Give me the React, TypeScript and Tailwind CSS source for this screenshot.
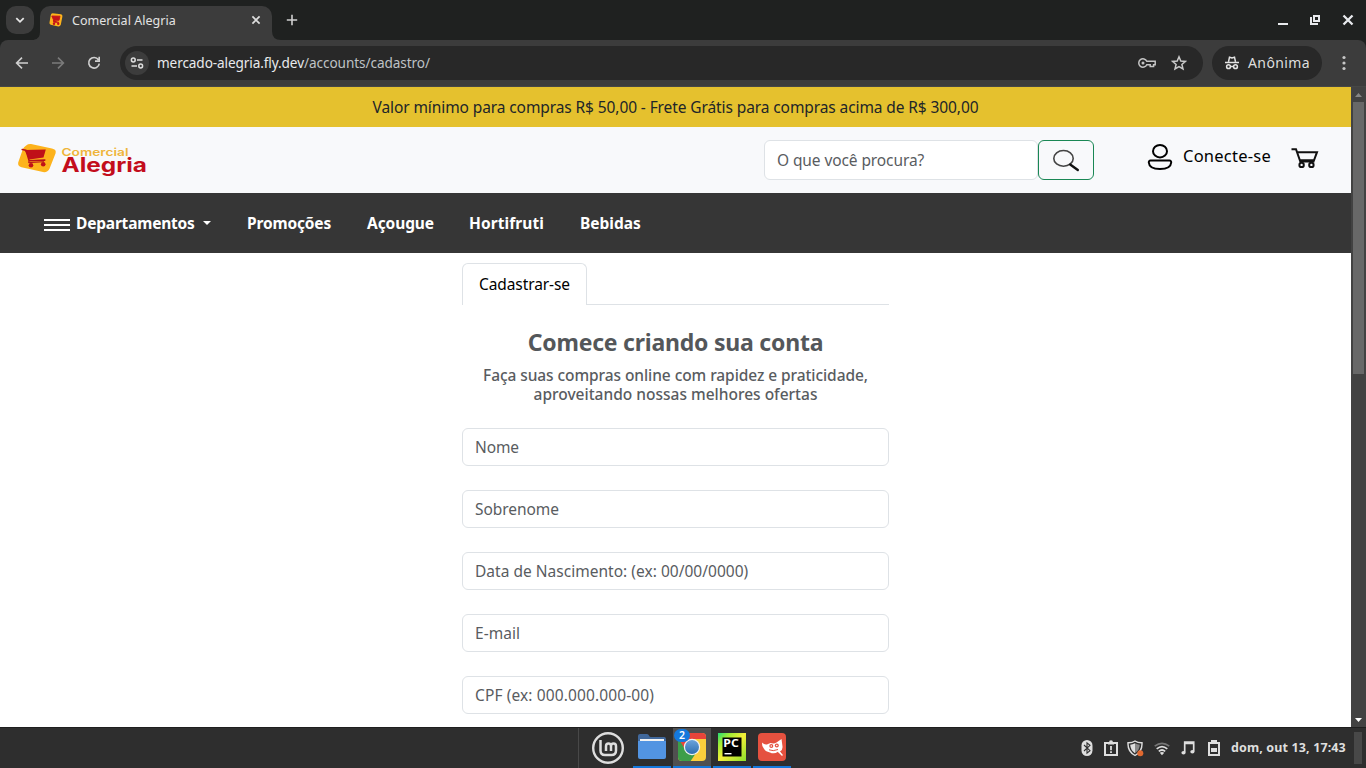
import React from "react";

function LogoMark({ className }: { className: string }) {
  return (
    <svg viewBox="0 0 40 32" className={className} preserveAspectRatio="none">
      <path d="M9.500 2.200Q11 .9 14 1.100L35 5.800Q39.600 6.800 38.600 10.500L32.500 26.500Q30.500 30.700 26 30L4.500 25Q.5 23.800 1.200 20L6 6Q7 3.800 9.500 2.200Z" fill="#fdb31c" />
      <path d="M7.500 7.300L28.800 6.800L26.500 15L12.500 17Z" fill="#c01018" />
      <path d="M5.200 6.800L9 7.500L12.200 18.300L27.800 17.700" fill="none" stroke="#b8101a" strokeWidth="1.600" strokeLinecap="round" strokeLinejoin="round" />
      <path d="M12.200 18.300L11.500 20.300L27 19.300" fill="none" stroke="#b8101a" strokeWidth="1" />
      <circle cx="14" cy="23" r="2.300" fill="#c01018" />
      <circle cx="26.200" cy="22" r="2.300" fill="#c01018" />
    </svg>
  );
}

function TabStrip() {
  return (
    <div className="flex h-10 shrink-0 bg-[#1f2120] pl-1.5">
      <div className="mt-[6px] flex h-7 w-7 items-center justify-center rounded-[10px] bg-[#3c3c3c]">
        <svg width="10" height="8" viewBox="0 0 10 8" fill="none" stroke="#e6e6e6" strokeWidth="1.800">
          <path d="M1.300 2.200L5 5.800L8.700 2.200" />
        </svg>
      </div>
      <svg width="6" height="40" viewBox="0 0 6 40" className="shrink-0">
        <path d="M6 32Q6 40 -2 40H6Z" fill="#3c3c3c" />
      </svg>
      <div className="mt-[6px] flex h-[34px] w-[232px] shrink-0 items-center rounded-t-[10px] bg-[#3c3c3c] pb-[6px] pl-[9px] pr-[10px]">
        <svg width="14" height="14" viewBox="0 0 14 14" className="shrink-0">
          <path d="M3.500 .3L12 1.200Q13.700 1.700 13.400 3.400L11.800 11.700Q11 13.700 9.300 13.400L1.700 11.700Q.1 11 .5 9.500L1.800 2Q2.100 .3 3.500 .3Z" fill="#fdb31c" />
          <path d="M2.800 3L11 3.200L10 7.300H4.700ZM4.400 7L4.700 9.300H10" fill="#c41318" stroke="#c41318" strokeWidth=".9" />
          <circle cx="5" cy="10.700" r="1.200" fill="#c41318" />
          <circle cx="9.200" cy="10.700" r="1.200" fill="#c41318" />
        </svg>
        <span className="ml-[9px] flex-1 pt-px text-[12.5px] leading-5 tracking-[0.04px] text-[#e3e3e3]">Comercial Alegria</span>
        <svg width="12" height="12" viewBox="0 0 12 12" stroke="#dedede" strokeWidth="1.700">
          <path d="M2.400 2.400L9.600 9.600M9.600 2.400L2.400 9.600" />
        </svg>
      </div>
      <svg width="9" height="40" viewBox="0 0 9 40" className="shrink-0">
        <path d="M0 31Q0 40 9 40H0Z" fill="#3c3c3c" />
      </svg>
      <svg width="12" height="12" viewBox="0 0 12 12" className="ml-[5px] mt-[14px]" stroke="#d0d0d0" strokeWidth="1.600">
        <path d="M6 .8V11.200M.8 6H11.200" />
      </svg>
      <div className="ml-auto flex gap-[19px] pr-[12px] pt-[14px]">
        <svg width="12" height="12" viewBox="0 0 12 12" className="mr-[1px]"><rect x="1" y="9" width="10" height="2" fill="#e8eaed" /></svg>
        <svg width="12" height="12" viewBox="0 0 12 12" fill="none" stroke="#e8eaed" strokeWidth="2">
          <rect x="5" y="2" width="5" height="5" />
          <path d="M2 3V10H9" />
        </svg>
        <svg width="12" height="12" viewBox="0 0 12 12" stroke="#e8eaed" strokeWidth="2.300" className="ml-[2px]">
          <path d="M1.500 1.500L10.500 10.500M10.500 1.500L1.500 10.500" />
        </svg>
      </div>
    </div>
  );
}

function Toolbar() {
  return (
    <div className="bg-[#1f2120]">
      <div className="flex h-[47px] items-center rounded-t-[8px] border-b border-[#464746] bg-[#3c3c3c] pl-[15px]">
        <svg width="14" height="14" viewBox="0 0 14 14" fill="none" stroke="#d0d0d0" strokeWidth="1.600">
          <path d="M13 7H2M7 1.600L1.600 7L7 12.400" />
        </svg>
        <svg width="14" height="14" viewBox="0 0 14 14" fill="none" stroke="#7b7b7b" strokeWidth="1.600" className="ml-[22px]">
          <path d="M1 7H12M7 1.600L12.400 7L7 12.400" />
        </svg>
        <svg width="14" height="14" viewBox="0 0 14 14" fill="none" stroke="#d0d0d0" strokeWidth="1.600" className="ml-[22px]">
          <path d="M11.400 3.700A5.300 5.300 0 1 0 12.300 7.600M12.200 .8V5.100H8" />
        </svg>
        <div className="ml-[19px] flex h-[34px] w-[1083px] items-center rounded-full bg-[#282828] pl-[5px] pr-[16px]">
          <div className="flex h-6 w-6 items-center justify-center rounded-full bg-[#3c3c3c]">
            <svg width="14" height="12" viewBox="0 0 14 12" fill="none" stroke="#dedede" strokeWidth="1.500">
              <circle cx="3.300" cy="3" r="1.900" />
              <path d="M7 3H12.500M1.500 9H7" />
              <circle cx="10.700" cy="9" r="1.900" />
            </svg>
          </div>
          <div className="ml-2 flex whitespace-nowrap text-[13.6px] leading-5">
            <span className="tracking-[-0.1px] text-[#e8eaed]">mercado-alegria.fly.dev</span>
            <span className="tracking-[-0.075px] text-[#bfc2c5]">/accounts/cadastro/</span>
          </div>
          <svg width="18" height="10" viewBox="0 0 18 10" fill="none" stroke="#c4c4c4" strokeWidth="1.500" className="ml-auto">
            <path d="M8.800 3.300H17.200V6.700H15.600V8.600H12.200V6.700H8.800A4.200 4.200 0 1 1 8.800 3.300Z" />
            <circle cx="5" cy="5" r="1.500" fill="#c4c4c4" stroke="none" />
          </svg>
          <svg width="16" height="16" viewBox="0 0 16 16" fill="none" stroke="#c9c9c9" strokeWidth="1.500" className="ml-[15px]">
            <path d="M8 1.800L9.800 6L14.400 6.400L10.900 9.400L12 13.900L8 11.500L4 13.900L5.100 9.400L1.600 6.400L6.200 6Z" />
          </svg>
        </div>
        <div className="ml-[9px] flex h-[34px] w-[110px] items-center rounded-full bg-[#282828] pl-[13px]">
          <svg width="14" height="14" viewBox="0 0 14 14" fill="none" stroke="#e3e3e3" strokeWidth="1.500">
            <path d="M3.500 5.800L4.500 1.200L7 2L9.500 1.200L10.500 5.800" />
            <path d="M0 6.500H14" />
            <circle cx="3.500" cy="10.700" r="1.900" />
            <circle cx="10.500" cy="10.700" r="1.900" />
            <path d="M5.400 10.500H8.600" />
          </svg>
          <span className="ml-[9px] text-[14px] leading-5 tracking-[0.4px] text-[#dedede]">Anônima</span>
        </div>
        <svg width="4" height="16" viewBox="0 0 4 16" fill="#c7c7c7" className="ml-[20px]">
          <circle cx="2" cy="2.500" r="1.600" />
          <circle cx="2" cy="8" r="1.600" />
          <circle cx="2" cy="13.500" r="1.600" />
        </svg>
      </div>
    </div>
  );
}

function Header() {
  return (
    <header className="flex h-[66px] shrink-0 items-start bg-[#f8f9fb] pl-[17px]">
      <LogoMark className="mt-[16px] h-[31px] w-[40px]" />
      <svg width="92" height="36" viewBox="0 0 92 36" className="ml-[3px] mt-[16px]">
        <text x="1.500" y="12.700" fontFamily="Inter" fontWeight="600" fontSize="10.500" fill="#efb53a" textLength="67" lengthAdjust="spacingAndGlyphs">Comercial</text>
        <text x="1.500" y="28.800" fontFamily="Inter" fontWeight="700" fontSize="19.500" fill="#c30d1c" textLength="85.500" lengthAdjust="spacingAndGlyphs">Alegria</text>
      </svg>
      <div className="ml-auto mt-[13px] flex">
        <div className="flex h-10 w-[274px] items-center rounded-md border border-[#dee2e6] bg-white pl-3 pt-[2px] text-[15.5px] tracking-[-0.1px] text-[#595c5f]">O que você procura?</div>
        <div className="flex h-10 w-14 items-center justify-center rounded-md border border-[#198754]">
          <svg width="28" height="24" viewBox="0 0 28 24" fill="none">
            <ellipse cx="11.500" cy="10.400" rx="9.700" ry="7.900" stroke="#444" strokeWidth="1.600" />
            <path d="M18.200 16.500L25.800 22" stroke="#111" strokeWidth="2.400" strokeLinecap="round" />
          </svg>
        </div>
      </div>
      <svg width="26" height="28" viewBox="0 0 26 28" fill="none" stroke="#000" strokeWidth="2" className="ml-[53px] mt-[16px]">
        <ellipse cx="13" cy="8.200" rx="7" ry="6.200" />
        <path d="M3.500 17.600H22.500Q24.300 17.600 24.200 19.500C23.800 24.500 18.500 26.100 13 26.100S2.200 24.500 1.800 19.500Q1.700 17.600 3.500 17.600Z" />
      </svg>
      <span className="ml-[10px] mt-[17px] w-[88px] whitespace-nowrap text-[16.5px] leading-6 tracking-[0.23px] text-black">Conecte-se</span>
      <svg width="30" height="24" viewBox="0 0 30 24" fill="none" stroke="#111" strokeWidth="2" className="ml-[19px] mr-[31px] mt-[19px]">
        <path d="M1.500 3.200H6L10.300 15.500H24.500M7 6.200H27L24 14.300H9.700" />
        <circle cx="11.600" cy="18.900" r="2.200" />
        <circle cx="21.400" cy="18.900" r="2.200" />
      </svg>
    </header>
  );
}

function Nav() {
  return (
    <nav className="flex h-[60px] shrink-0 items-center whitespace-nowrap bg-[#363636] pl-11 text-[15.5px] font-bold text-white">
      <div className="mt-[3px] flex w-[26px] flex-col gap-[3px]">
        <div className="h-[2px] bg-white" />
        <div className="h-[2px] bg-white" />
        <div className="h-[2px] bg-white" />
      </div>
      <span className="ml-[6px] w-[119px] pt-[2px] tracking-[-0.2px]">Departamentos</span>
      <svg width="8" height="4" viewBox="0 0 8 4" className="ml-2"><path d="M0 0H8L4 4Z" fill="#fff" /></svg>
      <span className="ml-9 w-[84px] pt-[2px] tracking-[-0.16px]">Promoções</span>
      <span className="ml-9 w-[66px] pt-[2px] tracking-[-0.09px]">Açougue</span>
      <span className="ml-9 w-[75px] pt-[2px] tracking-[0.08px]">Hortifruti</span>
      <span className="ml-9 pt-[2px]">Bebidas</span>
    </nav>
  );
}

const fields: { label: string; tracking: string }[] = [
  { label: "Nome", tracking: "tracking-[-0.1px]" },
  { label: "Sobrenome", tracking: "tracking-[-0.05px]" },
  { label: "Data de Nascimento: (ex: 00/00/0000)", tracking: "tracking-[0.02px]" },
  { label: "E-mail", tracking: "tracking-[0.03px]" },
  { label: "CPF (ex: 000.000.000-00)", tracking: "tracking-[0.12px]" },
];

function Form() {
  return (
    <main className="mx-auto mt-[10px] flex w-[427px] flex-col">
      <div className="flex">
        <div className="flex h-[42px] w-[125px] items-center justify-center rounded-t-md border border-b-0 border-[#dee2e6] text-[15.5px] tracking-[-0.09px] text-black">Cadastrar-se</div>
        <div className="flex-1 border-b border-[#dee2e6]" />
      </div>
      <h1 className="mt-[23px] text-center text-[23px] font-bold leading-[29px] tracking-[-0.22px] text-[#54575a]">Comece criando sua conta</h1>
      <p className="mt-[9px] whitespace-nowrap text-center text-[15.5px] font-medium leading-[19px] text-[#595c5f]">
        <span className="tracking-[-0.075px]">Faça suas compras online com rapidez e praticidade,</span>
        <br />
        aproveitando nossas melhores ofertas
      </p>
      <div className="mt-[24px] flex flex-col gap-6">
        {fields.map((f) => (
          <div key={f.label} className="flex h-[38px] items-center rounded-md border border-[#dee2e6] bg-white pl-3 pt-[2px] text-[15.5px] text-[#595c5f]">
            <span className={f.tracking}>{f.label}</span>
          </div>
        ))}
      </div>
    </main>
  );
}

function Scrollbar() {
  return (
    <div className="flex w-[15px] shrink-0 flex-col items-center bg-[#424242]">
      <svg width="15" height="15" viewBox="0 0 15 15"><path d="M4 10L7.500 6L11 10Z" fill="#868686" /></svg>
      <div className="h-[272px] w-[11px] bg-[#686868]" />
      <svg width="15" height="15" viewBox="0 0 15 15" className="mt-auto"><path d="M4 6L7.500 10L11 6Z" fill="#fff" /></svg>
    </div>
  );
}

function ChromeIcon() {
  return (
    <svg width="30" height="30" viewBox="0 0 30 30">
      <defs>
        <clipPath id="chromeClip"><rect x="1" y="1" width="28" height="28" rx="4" /></clipPath>
        <linearGradient id="chromeBlue" x1="0" y1="0" x2="0" y2="1">
          <stop offset="0" stopColor="#6ba3dc" />
          <stop offset="1" stopColor="#2f6fb0" />
        </linearGradient>
      </defs>
      <g clipPath="url(#chromeClip)">
        <rect width="30" height="30" fill="#fbcf3c" />
        <path d="M0 0H30V7H15L9 20L0 6Z" fill="#e8443a" />
        <path d="M0 4L9 19L19 21L13 30H0Z" fill="#3d9e49" />
      </g>
      <circle cx="15" cy="15" r="8.200" fill="#f3f3f3" />
      <circle cx="15" cy="15" r="7" fill="url(#chromeBlue)" />
    </svg>
  );
}

function Taskbar() {
  return (
    <footer className="flex h-[41px] shrink-0 border-t border-[#1f1f1f] bg-[#2e2e2e] pl-[578px]">
      <div className="w-px bg-[#484848]" />
      <div className="ml-[11px] flex w-9 items-center justify-center">
        <svg width="34" height="34" viewBox="0 0 34 34" fill="none" stroke="#dedede">
          <circle cx="17" cy="17" r="14.800" strokeWidth="2.400" />
          <path d="M9.500 9V19.500Q9.500 24 14 24H20.500Q25 24 25 19.500V15.200Q25 12.500 22.500 12.500T20 15.200V20M20 15.200Q20 12.500 17.500 12.500T15 15.200V20" strokeWidth="2.500" />
        </svg>
      </div>
      <div className="ml-[7px] flex gap-[2px]">
        <div className="flex w-[38px] flex-col items-center border-b-2 border-[#1478dc] pt-[5px]">
          <svg width="30" height="28" viewBox="0 0 30 28">
            <path d="M1 3Q1 1 3 1H10Q11.500 1 12 2.500T14 4H27Q29 4 29 6V14H1Z" fill="#41689b" />
            <rect x="3" y="6" width="24" height="5" fill="#f3f3f3" />
            <path d="M1 8H29V24Q29 26 27 26H3Q1 26 1 24Z" fill="#5294e2" />
          </svg>
        </div>
        <div className="relative flex w-[38px] flex-col items-center border-b-2 border-[#1478dc] bg-[#505050] pt-1">
          <ChromeIcon />
          <div className="absolute left-[1px] top-[1px] flex h-[13px] w-4 items-center justify-center rounded-full bg-[#1478dc] text-[10.5px] font-semibold leading-none text-white">2</div>
        </div>
        <div className="flex w-[38px] flex-col items-center border-b-2 border-[#1478dc] pt-[5px]">
          <svg width="28" height="28" viewBox="0 0 28 28">
            <defs>
              <linearGradient id="pcGrad" x1="0" y1="0" x2="1" y2="1">
                <stop offset="0" stopColor="#22dc78" />
                <stop offset=".22" stopColor="#9dec35" />
                <stop offset=".5" stopColor="#f4ef38" />
                <stop offset="1" stopColor="#8ae02c" />
              </linearGradient>
            </defs>
            <rect width="28" height="28" fill="url(#pcGrad)" />
            <rect x="4.500" y="4.500" width="19" height="19" fill="#000" />
            <text x="5.300" y="14" fontFamily="Noto Sans" fontWeight="700" fontSize="10.500" fill="#fff" textLength="15.500" lengthAdjust="spacingAndGlyphs">PC</text>
            <rect x="6.500" y="20" width="7" height="1.400" fill="#fff" />
          </svg>
        </div>
        <div className="flex w-[38px] flex-col items-center border-b-2 border-[#1478dc] pt-[5px]">
          <svg width="28" height="28" viewBox="0 0 28 28">
            <rect width="28" height="28" rx="4" fill="#e5513f" />
            <path d="M4 9.500Q7 12.500 10 11L12.500 10Q16 11 18.500 9.500L23.500 6L24.500 13.500Q24.800 17 22 18.500L24 21.500L21.500 20L20 18.800Q16 21.500 12 19.500Q7 18.500 5.500 15Q3.800 13 4 9.500Z" fill="#fff" />
            <circle cx="13.300" cy="13" r="2" fill="#e5513f" /><circle cx="18.800" cy="12.500" r="2" fill="#e5513f" />
            <circle cx="13.300" cy="13" r=".8" fill="#fff" /><circle cx="18.800" cy="12.500" r=".8" fill="#fff" />
            <path d="M11 16.800Q15 18.600 20 16.500" stroke="#e5513f" fill="none" />
            <path d="M20.500 18.500L24.500 22.500" stroke="#fff" strokeWidth="1.500" />
          </svg>
        </div>
      </div>
      <div className="ml-auto flex items-center pr-1">
        <svg width="12" height="16" viewBox="0 0 12 16">
          <rect x=".5" y="0" width="11" height="16" rx="5.500" fill="#dedede" />
          <path d="M3 5L9 10.700L6 13.200V2.800L9 5.300L3 11" fill="none" stroke="#2e2e2e" strokeWidth="1.100" />
        </svg>
        <svg width="14" height="16" viewBox="0 0 14 16" className="ml-[11px]">
          <path d="M1 3H13V15H1Z" fill="none" stroke="#dedede" strokeWidth="2" />
          <path d="M4 4.500V2.500H5Q5 .2 7 .2T9 2.500H10V4.500Z" fill="#dedede" />
          <path d="M6.100 6H7.900V10.200H6.100ZM6.100 11.300H7.900V13H6.100Z" fill="#dedede" />
        </svg>
        <svg width="17" height="17" viewBox="0 0 17 17" className="ml-[9px]">
          <path d="M8 1Q11 3 15 2.800Q15.500 11.500 8 15.500Q.5 11.500 1 2.800Q5 3 8 1Z" fill="none" stroke="#dedede" strokeWidth="1.400" />
          <path d="M8 3.300Q5.500 4.700 3.200 4.800Q3.500 10.500 8 13.200Z" fill="#dedede" />
          <path d="M8 3.300Q10.500 4.700 12.800 4.800Q12.500 10.500 8 13.200Z" fill="#888" />
          <circle cx="13.300" cy="13.300" r="3" fill="#e0682f" />
        </svg>
        <svg width="16" height="14" viewBox="0 0 16 14" fill="none" strokeWidth="1.700" className="ml-[10px] mt-[1px]">
          <path d="M.7 4.200Q8 -1.500 15.300 4.200" stroke="#777" />
          <path d="M2.700 6.900Q8 2.200 13.300 6.900M4.800 9.400Q8 6.600 11.200 9.400" stroke="#dedede" />
          <path d="M5.800 10.800L8 13.300L10.200 10.800Q8 9.200 5.800 10.800Z" fill="#dedede" />
        </svg>
        <svg width="14" height="14" viewBox="0 0 14 14" className="ml-[11px]">
          <path d="M3.700 11.500V1H12.700V10.500M3.700 2.500H12.700" fill="none" stroke="#dedede" strokeWidth="1.700" />
          <ellipse cx="2.500" cy="11.700" rx="2.100" ry="1.800" fill="#dedede" />
          <ellipse cx="11.400" cy="10.800" rx="2.100" ry="1.800" fill="#dedede" />
        </svg>
        <svg width="12" height="16" viewBox="0 0 12 16" className="ml-[13px]">
          <path d="M1 3H11V15H1Z" fill="none" stroke="#dedede" strokeWidth="2" />
          <rect x="3" y="0" width="6" height="3" fill="#dedede" />
          <rect x="3" y="8" width="6" height="4" fill="#dedede" />
        </svg>
        <span className="ml-[11px] w-[115px] whitespace-nowrap text-[12.5px] font-bold leading-5 tracking-[0.13px] text-[#dedede]">dom, out 13, 17:43</span>
        <div className="ml-2 h-8 w-2 bg-[#484848]" />
      </div>
    </footer>
  );
}

export default function App() {
  return (
    <div className="flex h-[768px] w-[1366px] flex-col overflow-hidden font-['Noto_Sans',sans-serif]">
      <TabStrip />
      <Toolbar />
      <div className="flex min-h-0 flex-1">
        <div className="flex w-[1351px] flex-col overflow-hidden bg-white">
          <div className="flex h-10 shrink-0 items-center justify-center whitespace-nowrap bg-[#e5c12e] pt-[2px] text-[15.5px] tracking-[-0.1px] text-[#212529]">
            Valor mínimo para compras R$ 50,00 - Frete Grátis para compras acima de R$ 300,00
          </div>
          <Header />
          <Nav />
          <Form />
        </div>
        <Scrollbar />
      </div>
      <Taskbar />
    </div>
  );
}
